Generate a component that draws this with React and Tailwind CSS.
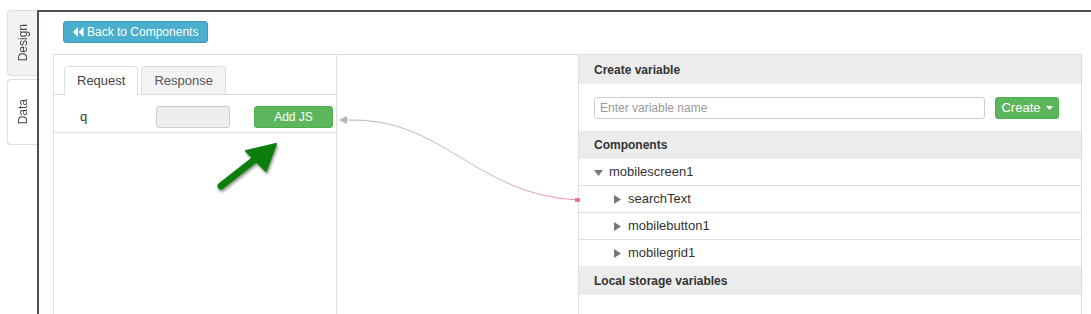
import React from 'react';

const BackIcon = () => (
  <svg width="11" height="10" viewBox="0 0 11 10" className="mr-[3px]">
    <path d="M5 0 L0 5 L5 10 Z" fill="white" />
    <path d="M10.5 0 L5.5 5 L10.5 10 Z" fill="white" />
  </svg>
);

const Caret = ({ down }) => (
  <svg width="9" height="9" viewBox="0 0 9 9" className="shrink-0">
    {down ? <path d="M0 2 L9 2 L4.5 8 Z" fill="#777" /> : <path d="M1 0 L8 4.5 L1 9 Z" fill="#777" />}
  </svg>
);

const tree = [
  { name: 'mobilescreen1', depth: 0, open: true },
  { name: 'searchText', depth: 1 },
  { name: 'mobilebutton1', depth: 1 },
  { name: 'mobilegrid1', depth: 1 },
];

const App = () => {
  return (
    <div className="w-[1091px] h-[314px] bg-white overflow-hidden flex text-[#333] text-[13px]" style={{ fontFamily: '"Liberation Sans", Arial, sans-serif' }}>
      {/* side tabs */}
      <div className="w-[37px] pt-[10px] pl-[7px] flex flex-col gap-[3px] shrink-0">
        <div className="h-[66px] bg-[#f2f2f2] border border-r-0 border-[#ddd] rounded-l-[4px] flex items-center justify-center">
          <span className="[writing-mode:vertical-rl] rotate-180 text-[12px] text-[#444]">Design</span>
        </div>
        <div className="h-[66px] bg-white border border-r-0 border-[#ddd] rounded-l-[4px] flex items-center justify-center">
          <span className="[writing-mode:vertical-rl] rotate-180 text-[12px] text-[#444]">Data</span>
        </div>
      </div>

      <div className="flex-1 mt-[10px] border-t-2 border-l-2 border-[#4a4f57] pl-[14px] pt-[9px] pr-[9px]">
        <button className="h-[22px] px-[9px] flex items-center bg-[#4aaece] border border-[#3a9bbd] rounded-[3px] text-white text-[12px] ml-[10px]">
          <BackIcon />
          Back to Components
        </button>

        <div className="mt-[11px] h-[270px] border border-[#ddd] flex relative">
          {/* left panel */}
          <div className="w-[283px] border-r border-[#ddd] shrink-0">
            <div className="flex gap-[3px] pl-[10px] pt-[11px] border-b border-[#ddd] h-[40px] items-end">
              <div className="h-[29px] px-[12px] flex items-center bg-white border border-b-0 border-[#ddd] rounded-t-[4px] mb-[-1px] text-[13px] text-[#444]">Request</div>
              <div className="h-[28px] px-[12px] flex items-center bg-[#f3f3f3] border border-b-0 border-[#ddd] rounded-t-[4px] text-[13px] text-[#555]">Response</div>
            </div>
            <div className="h-[38px] border-b border-[#ddd] flex items-center pl-[26px] pt-[6px]">
              <span className="w-[76px] text-[13px] text-[#333]">q</span>
              <div className="w-[74px] h-[22px] bg-[#eee] border border-[#ccc] rounded-[3px]" />
              <button className="ml-[24px] w-[79px] h-[22px] bg-[#5cb65c] border border-[#4cae4c] rounded-[3px] text-white text-[12px]">Add JS</button>
            </div>
          </div>

          {/* middle */}
          <div className="w-[241px] shrink-0" />

          {/* right panel */}
          <div className="flex-1 border-l border-[#ddd]">
            <div className="h-[29px] bg-[#ececec] flex items-center pl-[15px] font-bold text-[12px] text-[#333]">Create variable</div>
            <div className="h-[47px] flex items-center pl-[15px] pr-[22px] gap-[10px]">
              <div className="flex-1 h-[22px] border border-[#ccc] rounded-[3px] flex items-center px-[5px] text-[12px] text-[#999]">Enter variable name</div>
              <button className="w-[64px] h-[22px] bg-[#5cb65c] border border-[#4cae4c] rounded-[3px] text-white text-[13px] flex items-center justify-center gap-[5px]">
                Create
                <svg width="7" height="4" viewBox="0 0 7 4"><path d="M0 0 L7 0 L3.5 4 Z" fill="white" /></svg>
              </button>
            </div>
            <div className="h-[28px] bg-[#ececec] flex items-center pl-[15px] font-bold text-[12px] text-[#333]">Components</div>
            {tree.map((t) => (
              <div key={t.name} className="h-[27px] border-b border-[#ddd] flex items-center gap-[6px]" style={{ paddingLeft: t.depth ? 34 : 15 }}>
                <Caret down={t.open} />
                <span className="text-[13px] text-[#333]">{t.name}</span>
              </div>
            ))}
            <div className="h-[29px] bg-[#ececec] flex items-center pl-[15px] font-bold text-[12px] text-[#333] -mt-px">Local storage variables</div>
          </div>

          {/* connector + pointer arrow overlay */}
          <svg className="absolute left-0 top-0 pointer-events-none" width="530" height="200" viewBox="0 0 530 200">
            <defs>
              <linearGradient id="wire" x1="0" y1="0" x2="1" y2="0">
                <stop offset="0" stopColor="#b5b5b5" />
                <stop offset="0.55" stopColor="#c0c0c0" />
                <stop offset="1" stopColor="#f08aa0" />
              </linearGradient>
              <filter id="sh" x="-30%" y="-30%" width="160%" height="160%">
                <feDropShadow dx="1" dy="2" stdDeviation="1.5" floodColor="#000" floodOpacity="0.45" />
              </filter>
            </defs>
            <path d="M293 65 C 390 62, 420 140, 524 145" fill="none" stroke="url(#wire)" strokeWidth="1" />
            <path d="M285 65 L293 61 L293 69 Z" fill="#b5b5b5" />
            <rect x="521" y="143" width="5" height="4" fill="#f07890" />
            <g filter="url(#sh)">
              <path d="M167 131 L204 102" stroke="#0a7d0a" strokeWidth="7" strokeLinecap="round" />
              <path d="M192 96 L222 89 L212 116 Z" fill="#0a7d0a" stroke="#0a7d0a" strokeWidth="2" strokeLinejoin="round" />
            </g>
          </svg>
        </div>
      </div>
    </div>
  );
};

export default App;
